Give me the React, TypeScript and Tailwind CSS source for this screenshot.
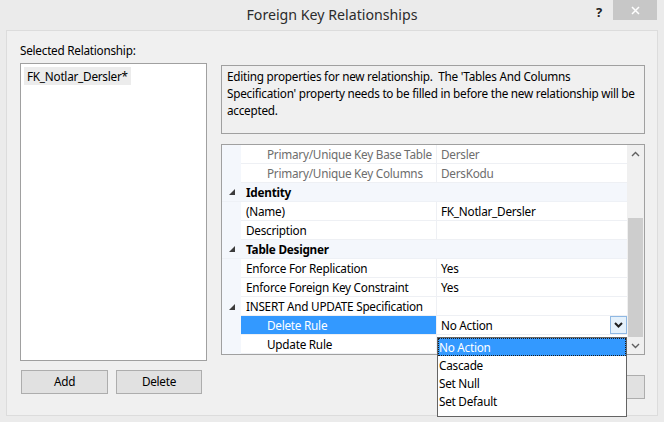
import React from 'react';

const FONT = { fontFamily: '"Noto Sans", "Open Sans", sans-serif' };

type Row =
  | { kind: 'cat'; label: string }
  | { kind: 'prop'; label: string; value?: string; sub?: boolean; muted?: boolean; expander?: boolean; selected?: boolean; combo?: boolean };

const ROWS: Row[] = [
  { kind: 'prop', label: 'Primary/Unique Key Base Table', value: 'Dersler', sub: true, muted: true },
  { kind: 'prop', label: 'Primary/Unique Key Columns', value: 'DersKodu', sub: true, muted: true },
  { kind: 'cat', label: 'Identity' },
  { kind: 'prop', label: '(Name)', value: 'FK_Notlar_Dersler' },
  { kind: 'prop', label: 'Description', value: '' },
  { kind: 'cat', label: 'Table Designer' },
  { kind: 'prop', label: 'Enforce For Replication', value: 'Yes' },
  { kind: 'prop', label: 'Enforce Foreign Key Constraint', value: 'Yes' },
  { kind: 'prop', label: 'INSERT And UPDATE Specification', value: '', expander: true },
  { kind: 'prop', label: 'Delete Rule', value: 'No Action', sub: true, selected: true, combo: true },
  { kind: 'prop', label: 'Update Rule', value: '', sub: true },
];

const OPTIONS = ['No Action', 'Cascade', 'Set Null', 'Set Default'];

function Expanded() {
  return (
    <svg width="6" height="6" viewBox="0 0 6 6">
      <polygon points="0,6 6,6 6,0" fill="#3c3c3c" />
    </svg>
  );
}

function Chevron({ up, color = '#606060', bold }: { up?: boolean; color?: string; bold?: boolean }) {
  return (
    <svg width="9" height="6" viewBox="0 0 9 6">
      <polyline
        points={up ? '1,5 4.5,1.5 8,5' : '1,1 4.5,4.5 8,1'}
        fill="none"
        stroke={color}
        strokeWidth={bold ? 2 : 1.4}
      />
    </svg>
  );
}

function GridRow({ row }: { row: Row }) {
  if (row.kind === 'cat') {
    return (
      <div className="flex h-[19px] bg-[#f4f7fc] border-b border-[#eef1f6]">
        <div className="w-[19px] flex items-center justify-center pl-[1px]">
          <Expanded />
        </div>
        <div className="pl-[5px] font-bold text-black leading-[19px]">{row.label}</div>
      </div>
    );
  }
  return (
    <div className="flex h-[19px]">
      <div className="w-[19px] flex items-center justify-center pl-[1px] bg-[#f4f7fc]">
        {row.expander && <Expanded />}
      </div>
      <div
        className={
          'w-[196px] border-b border-r border-[#eef0f4] leading-[19px] whitespace-nowrap overflow-hidden ' +
          (row.sub ? 'pl-[26px] ' : 'pl-[5px] ') +
          (row.selected ? 'bg-[#3399ff] text-white' : row.muted ? 'text-[#6d6d6d]' : 'text-black')
        }
      >
        {row.label}
      </div>
      <div
        className={
          'flex-1 flex items-center border-b border-[#eef0f4] pl-[4px] ' +
          (row.muted ? 'text-[#6d6d6d]' : 'text-black')
        }
      >
        <span className="flex-1 leading-[19px]">{row.value}</span>
        {row.combo && (
          <div className="w-[17px] h-[18px] bg-[#e5f1fb] border border-[#8fb8e3] flex items-center justify-center">
            <Chevron color="#1e1e1e" bold />
          </div>
        )}
      </div>
    </div>
  );
}

function Button({ label, w }: { label: string; w: string }) {
  return (
    <div className={`${w} h-[24px] bg-[#e1e1e1] border border-[#adadad] flex items-center justify-center text-black`}>
      {label}
    </div>
  );
}

export default function App() {
  return (
    <div
      className="relative w-[664px] h-[422px] bg-[#ebebeb] flex flex-col text-[11.75px] tracking-[-0.25px] overflow-hidden"
      style={FONT}
    >
      {/* title bar */}
      <div className="h-[30px] grid grid-cols-[1fr_auto_1fr]">
        <div />
        <div className="text-[14.2px] tracking-normal text-[#2b2b2b] pt-[5px] leading-[20px]">Foreign Key Relationships</div>
        <div className="flex justify-end items-start">
          <div className="text-[13px] font-bold text-[#222] leading-[18px] pt-[3px] mr-[11px]">?</div>
          <div className="w-[44px] h-[20px] bg-[#c7c7c7] mr-[7px] flex items-center justify-center">
            <svg width="9" height="9" viewBox="0 0 9 9">
              <path d="M1 1 L8 8 M8 1 L1 8" stroke="#ffffff" strokeWidth="1.5" />
            </svg>
          </div>
        </div>
      </div>

      {/* body */}
      <div className="flex-1 mx-[6px] mb-[6px] bg-[#f0f0f0] border border-[#dcdcdc] flex pt-[11px] pl-[13px]">
        {/* left column */}
        <div className="w-[187px] flex flex-col">
          <div className="leading-[17px] text-black">Selected Relationship:</div>
          <div className="mt-[4px] h-[298px] bg-white border border-[#a0a0a0] p-[3px]">
            <div className="inline-block bg-[#ececec] px-[3px] leading-[18px] text-black">FK_Notlar_Dersler*</div>
          </div>
          <div className="mt-[9px] flex gap-[8px] pl-[1px]">
            <Button label="Add" w="w-[87px]" />
            <Button label="Delete" w="w-[86px]" />
          </div>
        </div>

        {/* right column */}
        <div className="ml-[14px] w-[424px] flex flex-col pt-[23px]">
          <div className="h-[69px] border border-[#a0a0a0] bg-[#f0f0f0] pl-[5px] pr-[2px] pt-[2px] leading-[17px] text-black whitespace-nowrap">
            Editing properties for new relationship.&nbsp; The 'Tables And Columns
            <br />
            Specification' property needs to be filled in before the new relationship will be
            <br />
            accepted.
          </div>

          <div className="mt-[10px] h-[211px] border border-[#a0a0a0] bg-white flex">
            <div className="flex-1 flex flex-col">
              {ROWS.map((r, i) => (
                <GridRow key={i} row={r} />
              ))}
            </div>
            <div className="w-[17px] bg-[#f0f0f0] flex flex-col">
              <div className="h-[17px] flex items-center justify-center">
                <Chevron up />
              </div>
              <div className="h-[56px]" />
              <div className="mx-[1px] h-[119px] bg-[#cdcdcd]" />
              <div className="h-[17px] flex items-center justify-center">
                <Chevron />
              </div>
            </div>
          </div>

          <div className="mt-[20px] flex justify-end gap-[8px]">
            <Button label="OK" w="w-[87px]" />
            <Button label="Cancel" w="w-[87px]" />
          </div>
        </div>
      </div>

      {/* open combo list */}
      <div className="absolute left-[437px] top-[337px] w-[190px] h-[80px] bg-white border border-[#646464] flex flex-col text-black">
        {OPTIONS.map((o, i) => (
          <div
            key={o}
            className={
              'h-[18px] leading-[16px] ' +
              (i === 0 ? 'bg-[#3399ff] text-white border border-dotted border-[#1b1b1b]' : 'border border-transparent')
            }
          >
            {o}
          </div>
        ))}
      </div>
    </div>
  );
}
